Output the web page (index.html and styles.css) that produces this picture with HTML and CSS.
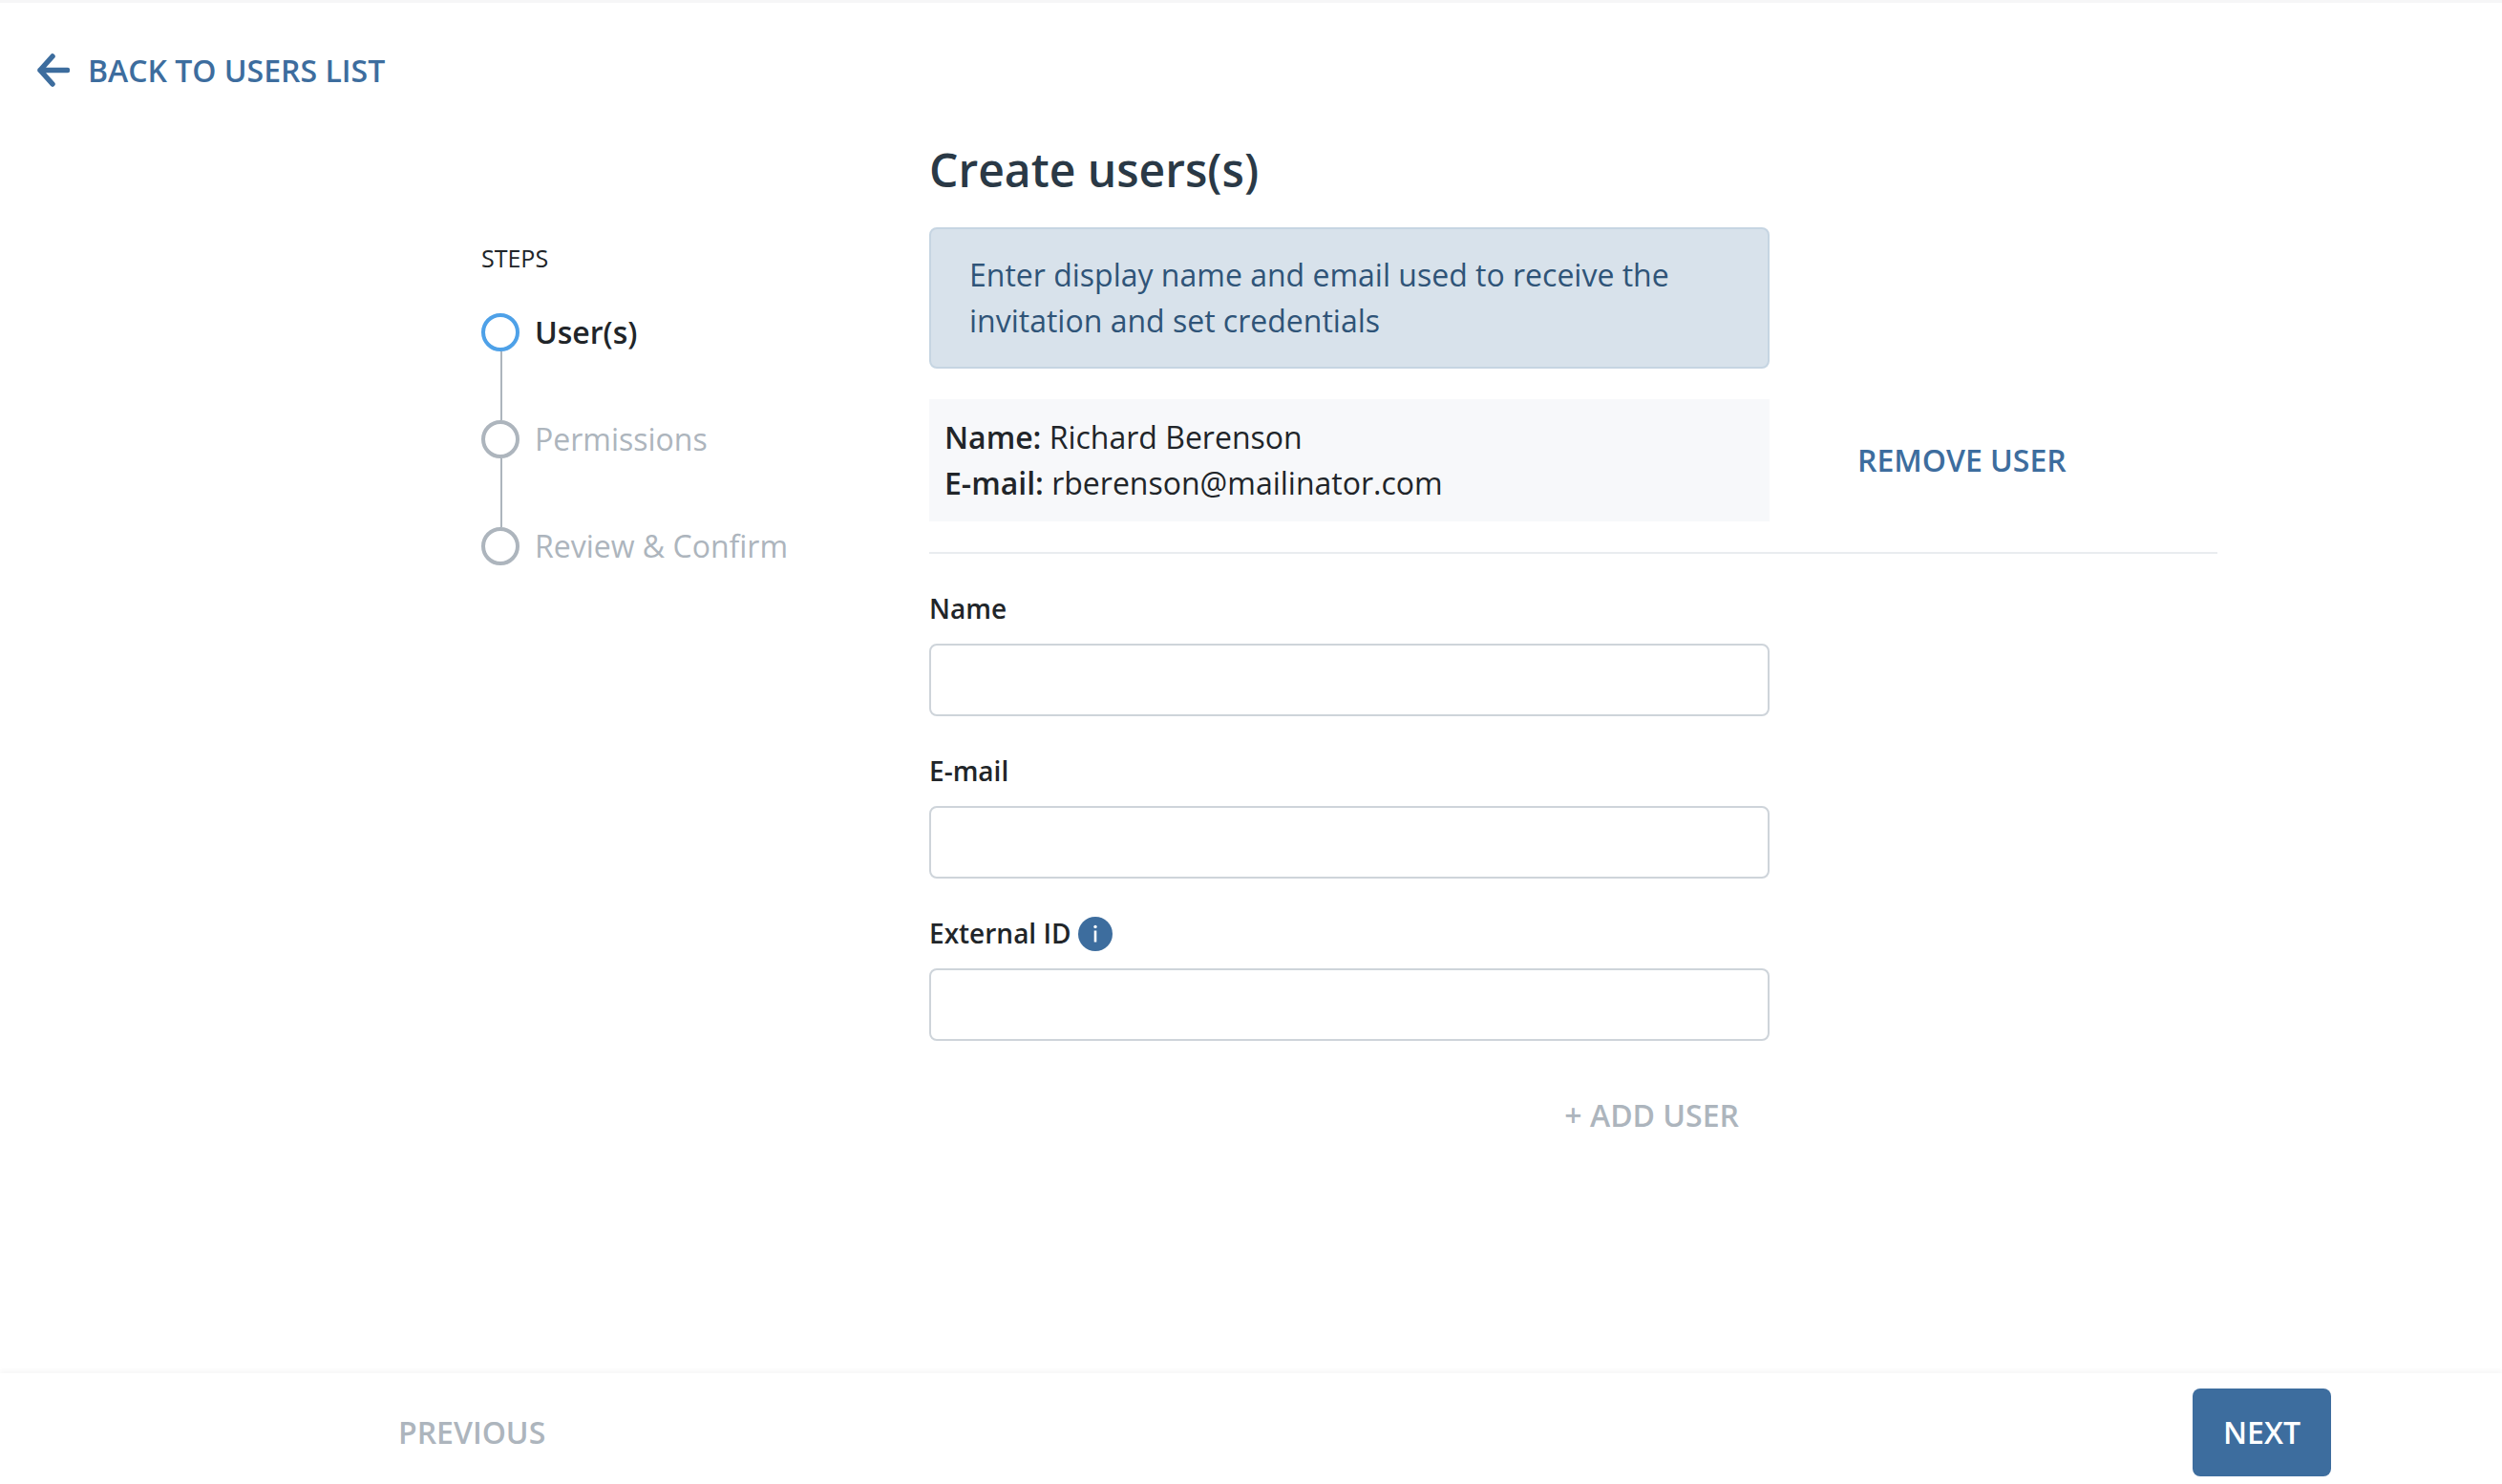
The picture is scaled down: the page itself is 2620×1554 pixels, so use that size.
FILE: index.html
```html
<!DOCTYPE html>
<html lang="en">
<head>
<meta charset="utf-8">
<title>Create users(s)</title>
<link rel="stylesheet" href="styles.css">
</head>
<body>
<div class="page">
  <header class="topbar">
    <a class="back-link" href="#">
      <svg class="back-icon" viewBox="0 0 34 35" aria-hidden="true"><path d="M16 3 3 17.500 16 32M3 17.500h28.500" fill="none" stroke="currentColor" stroke-width="5.500" stroke-linecap="round" stroke-linejoin="round"/></svg>
      <span>BACK TO USERS LIST</span>
    </a>
  </header>
  <main class="main">
    <aside class="steps">
      <div class="steps-title">STEPS</div>
      <ol class="step-list">
        <li class="step step-active"><span class="step-dot"></span><span>User(s)</span></li>
        <li class="step"><span class="step-dot"></span><span>Permissions</span></li>
        <li class="step"><span class="step-dot"></span><span>Review &amp; Confirm</span></li>
      </ol>
    </aside>
    <section class="content">
      <h1 class="title">Create users(s)</h1>
      <div class="column info-box">Enter display name and email used to receive the invitation and set credentials</div>
      <div class="user-row">
        <div class="column user-card">
          <div><strong>Name:</strong> Richard Berenson</div>
          <div><strong>E-mail:</strong> rberenson@mailinator.com</div>
        </div>
        <a class="remove-link" href="#">REMOVE USER</a>
      </div>
      <hr class="divider">
      <form class="column form">
        <div class="field">
          <label class="field-label" for="name">Name</label>
          <input class="field-input" id="name" type="text">
        </div>
        <div class="field">
          <label class="field-label" for="email">E-mail</label>
          <input class="field-input" id="email" type="text">
        </div>
        <div class="field">
          <label class="field-label" for="ext">External ID
            <svg class="info-icon" viewBox="0 0 36 36" aria-hidden="true"><circle cx="18" cy="18" r="18" fill="#3d6d9e"/><circle cx="18" cy="10.500" r="1.700" fill="#fff"/><rect x="16.700" y="14.500" width="2.600" height="12" fill="#fff"/></svg>
          </label>
          <input class="field-input" id="ext" type="text">
        </div>
        <div class="add-row"><span class="add-link">+ ADD USER</span></div>
      </form>
    </section>
  </main>
  <footer class="footer">
    <span class="prev">PREVIOUS</span>
    <button class="next" type="button">NEXT</button>
  </footer>
</div>
</body>
</html>
```
FILE: styles.css
```css
* { box-sizing: border-box; }
html, body { margin: 0; padding: 0; background: #fff; }
body {
  font-family: "Open Sans", "Noto Sans", sans-serif;
  font-size: 32px;
  line-height: 48px;
  color: #212529;
}
.page {
  height: 100vh;
  display: flex;
  flex-direction: column;
  overflow: hidden;
  border-top: 3px solid #f6f6f7;
}
.topbar { padding: 44px 0 0 39px; height: 115px; }
.back-link {
  display: flex;
  align-items: center;
  gap: 19px;
  color: #3d6d9e;
  font-weight: 600;
  text-decoration: none;
  height: 54px;
}
.back-icon { width: 34px; height: 35px; margin-top: -1px; }
.main { flex: 1; display: flex; padding-left: 504px; }
.steps { width: 469px; padding-top: 128px; }
.steps-title { font-size: 25px; line-height: 48px; height: 82px; }
.step-list { list-style: none; margin: 0; padding: 0; }
.step {
  position: relative;
  height: 112px;
  display: flex;
  align-items: flex-start;
  gap: 16px;
  color: #adb5bd;
  line-height: 40px;
}
.step:not(:last-child)::after {
  content: "";
  position: absolute;
  left: 20px;
  top: 40px;
  width: 2px;
  height: 72px;
  background: #adb5bd;
}
.step-dot {
  width: 40px;
  height: 40px;
  border: 4px solid #adb5bd;
  border-radius: 50%;
  flex: none;
}
.step-active { color: #212529; font-weight: 600; }
.step-active .step-dot { border-color: #4ea1e8; }
.content { width: 1349px; }
.title {
  margin: 0;
  font-size: 48px;
  line-height: 64px;
  font-weight: 600;
  color: #2a3946;
  padding-top: 28px;
  height: 120px;
}
.column { width: 880px; }
.info-box {
  background: #d8e2eb;
  border: 2px solid #c6d5e2;
  border-radius: 8px;
  color: #2f5478;
  padding: 24px 40px;
  height: 148px;
}
.user-row { display: flex; align-items: center; margin-top: 32px; }
.user-card { background: #f7f8fa; padding: 16px 16px; height: 128px; }
.user-card strong { font-weight: 600; }
.remove-link {
  margin-left: 92px;
  color: #3d6d9e;
  font-weight: 600;
  text-decoration: none;
}
.divider { margin: 32px 0 0; border: 0; border-top: 2px solid #e9ecef; }
.form { padding-top: 30px; }
.field { height: 170px; }
.field-label {
  display: flex;
  align-items: center;
  gap: 7px;
  height: 54px;
  font-size: 28px;
  font-weight: 600;
  margin-bottom: 10px;
}
.info-icon { width: 36px; height: 36px; margin-top: 1px; }
.field-input {
  display: block;
  width: 100%;
  height: 76px;
  border: 2px solid #ced4da;
  border-radius: 8px;
  background: #fff;
}
.add-row { display: flex; justify-content: flex-end; padding: 0 32px 0 0; margin-top: 24px; }
.add-link { color: #adb5bd; font-weight: 600; }
.footer {
  height: 116px;
  flex: none;
  display: flex;
  align-items: center;
  justify-content: space-between;
  padding: 16px 179px 8px 417px;
  box-shadow: 0 -3px 5px rgba(0, 0, 0, .035);
}
.prev { color: #adb5bd; font-weight: 600; }
.next {
  width: 145px;
  height: 92px;
  border: 0;
  border-radius: 8px;
  background: #3d6d9e;
  color: #fff;
  font: 600 32px/48px "Open Sans", "Noto Sans", sans-serif;
  padding: 0;
}
```
